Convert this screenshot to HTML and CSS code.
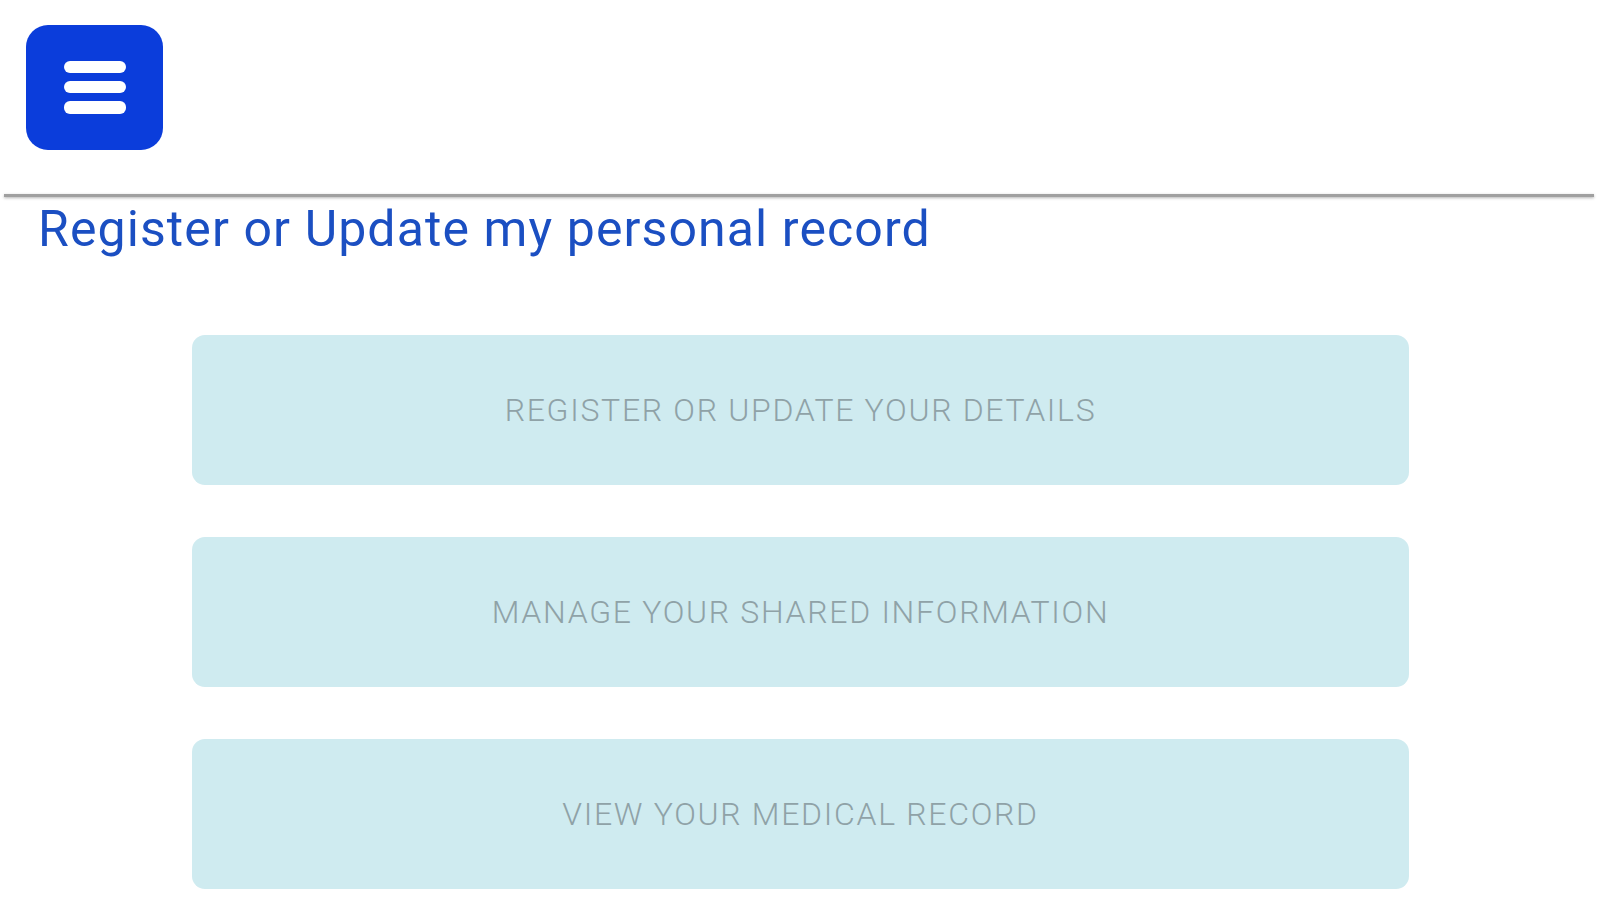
FILE: index.html
```html
<!DOCTYPE html>
<html lang="en">
<head>
<meta charset="utf-8">
<title>Register or Update my personal record</title>
<link rel="stylesheet" href="styles.css">
</head>
<body>
  <header class="topbar">
    <button class="menu-btn" aria-label="Menu">
      <svg width="64" height="56" viewBox="0 0 64 56">
        <rect x="1" y="1" width="62" height="12" rx="6" fill="#fff"/>
        <rect x="1" y="21" width="62" height="12" rx="6" fill="#fff"/>
        <rect x="1" y="41" width="62" height="13" rx="6" fill="#fff"/>
      </svg>
    </button>
  </header>
  <div class="divider"></div>
  <h1 class="title">Register or Update my personal record</h1>
  <main class="actions">
    <a class="action">Register or update your details</a>
    <a class="action">Manage your shared information</a>
    <a class="action">View your medical record</a>
  </main>
</body>
</html>
```

FILE: styles.css
```css
html, body {
  margin: 0;
  padding: 0;
  background: #ffffff;
  font-family: Roboto, "Liberation Sans", sans-serif;
  overflow: hidden;
}

.topbar {
  height: 194px;
  padding: 25px 0 0 26px;
  box-sizing: border-box;
}

.menu-btn {
  width: 137px;
  height: 125px;
  border: none;
  border-radius: 22px;
  background: #0b3ddb;
  display: flex;
  align-items: center;
  justify-content: center;
  padding: 0;
}

.menu-btn svg {
  display: block;
}

.divider {
  height: 3px;
  margin: 0 6px 0 4px;
  background: #a0a0a0;
  box-shadow: 0 1px 3px rgba(0, 0, 0, 0.3);
}

.title {
  margin: 0;
  padding: 4px 0 0 38px;
  font-size: 50px;
  font-weight: 400;
  line-height: 56px;
  letter-spacing: 1.1px;
  color: #1b4fc2;
}

.actions {
  display: flex;
  flex-direction: column;
  gap: 52px;
  margin: 78px 0 0 192px;
  width: 1217px;
}

.action {
  height: 150px;
  border-radius: 13px;
  background: #cfebf0;
  display: flex;
  align-items: center;
  justify-content: center;
  font-size: 32px;
  font-weight: 300;
  text-transform: uppercase;
  color: #8fa2a7;
  letter-spacing: 1.7px;
}
```
